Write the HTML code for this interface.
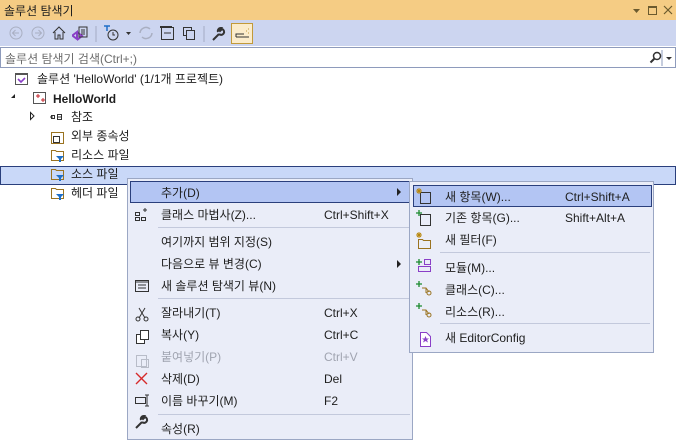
<!DOCTYPE html>
<html><head><meta charset="utf-8"><style>
*{margin:0;padding:0;box-sizing:border-box}
body{width:676px;height:446px;overflow:hidden;background:#fff;font-family:"Liberation Sans","Noto Sans CJK KR",sans-serif;font-size:12px;color:#1e1e1e;position:relative}
.abs{position:absolute}
.title{left:0;top:0;width:676px;height:20px;background:#f5cc84;}
.title span{position:absolute;left:4px;top:2px;font-size:12px}
.tb{left:0;top:20px;width:676px;height:26px;background:#ccd5f0}
.search{left:0;top:47px;width:676px;height:21px;border:1px solid #8e9bbc;background:#fff}
.search span{position:absolute;left:4px;top:2px;color:#6d6d6d}
.row{position:absolute;height:19px;line-height:19px;white-space:nowrap}
.menu{position:absolute;background:#eaedf8;border:1px solid #9ba7c4}
.mi{position:absolute;height:22px;line-height:22px;white-space:nowrap}
.sep{position:absolute;height:1px;background:#c3c9dc}
.hl{position:absolute;background:#b3c5f3;border:1px solid #2a3f7c}
</style></head><body>
<div class="abs title"><span>솔루션 탐색기</span>
<svg class="abs" style="left:630px;top:4px" width="44" height="12"><path d="M3 5h7l-3.5 4z" fill="#6b5a2e"/><rect x="18.5" y="2.5" width="8" height="8" fill="none" stroke="#6b5a2e"/><rect x="18" y="2" width="9" height="2" fill="#6b5a2e"/><path d="M34 2l8 8M42 2l-8 8" stroke="#6b5a2e" stroke-width="1.2"/></svg>
</div>
<div class="abs tb">
<svg width="260" height="26">
<circle cx="16" cy="13" r="6" fill="none" stroke="#a9afc2"/><path d="M19 13h-6m2.5-3l-3 3 3 3" stroke="#a9afc2" fill="none"/>
<circle cx="38" cy="13" r="6" fill="none" stroke="#a9afc2"/><path d="M35 13h6m-2.5-3l3 3-3 3" stroke="#a9afc2" fill="none"/>
<path d="M53 13l6-6 6 6M55 12v7h3v-4h2v4h3v-7" stroke="#333" fill="none"/>
<path d="M73 15l4-3v7l-4-3zM77 12l5 4-5 4" stroke="#8a3fc7" stroke-width="2" fill="none"/><rect x="79" y="7" width="8" height="10" fill="none" stroke="#333"/><path d="M81 10h4M81 12h4M81 14h4" stroke="#333"/>
<path d="M96 6v16" stroke="#a4acc4"/>
<path d="M104 6h6M107 6v5" stroke="#1e6fc7" stroke-width="1.5"/><circle cx="113" cy="15" r="5" fill="none" stroke="#333"/><path d="M113 12v3h2" stroke="#333" fill="none"/>
<path d="M126 12h5l-2.5 3z" fill="#333"/>
<path d="M140 13a6 6 0 0 1 10-4M152 13a6 6 0 0 1-10 4" stroke="#a9afc2" fill="none" stroke-width="1.5"/>
<rect x="161.5" y="7.5" width="12" height="12" fill="none" stroke="#333"/><path d="M164 13h7" stroke="#333"/><rect x="160" y="6" width="12" height="2" fill="#333"/>
<rect x="183.5" y="7.5" width="8" height="8" fill="none" stroke="#333"/><rect x="186.5" y="10.5" width="8" height="9" fill="#ccd5f0" stroke="#333"/>
<path d="M204 6v16" stroke="#a4acc4"/>
<path d="M213 20l6-6m0 0a3 3 0 1 0 3-5l-2 2-1-1 2-2a3 3 0 0 0-3 4" stroke="#333" stroke-width="2" fill="none"/>
<rect x="231.5" y="3.5" width="21" height="20" fill="#fbeccb" stroke="#c29a3a"/><path d="M236 17h13M236 17v-3h8" stroke="#333" fill="none"/><path d="M246 11h1M248 13h1M248 9h1" stroke="#c29a3a"/>
</svg></div>
<div class="abs search"><span>솔루션 탐색기 검색(Ctrl+;)</span>
<svg class="abs" style="left:646px;top:2px" width="28" height="16"><circle cx="10" cy="6" r="3.5" fill="none" stroke="#333" stroke-width="1.5"/><path d="M7.5 8.5l-4 4" stroke="#333" stroke-width="2"/><path d="M15 0v16" stroke="#8e9bbc"/><path d="M19 7h6l-3 3z" fill="#333"/></svg>
</div>
<!-- tree -->
<svg class="abs" style="left:0;top:70px" width="130" height="140">
<rect x="15.5" y="3.5" width="12" height="11" fill="#fff" stroke="#555"/><rect x="15" y="3" width="13" height="2" fill="#555"/><path d="M18 9l3 3 4-4" stroke="#8a3fc7" stroke-width="1.6" fill="none"/>
<path d="M11 28l4-4v4z" fill="#222"/>
<rect x="33.5" y="22.5" width="12" height="11" fill="#fff" stroke="#555"/><path d="M36 26h4M38 24v4M41 30h4M43 28v4" stroke="#c4262e"/>
<path d="M30.5 42.5l3.5 3.5-3.5 3.5z" fill="none" stroke="#222"/>
<path d="M50 47h3M58 47h3" stroke="#333"/><rect x="51.5" y="45.5" width="3" height="3" fill="none" stroke="#333"/><rect x="57.5" y="44.5" width="4" height="5" fill="none" stroke="#333"/>
<rect x="51.5" y="62.5" width="12" height="11" fill="#fff" stroke="#9a7320"/><rect x="53.5" y="66.5" width="6" height="6" fill="none" stroke="#333"/>
</svg>
<svg class="abs" style="left:50px;top:147px" width="16" height="60"><g id="f"><path d="M1.5 3.5h4l1 1h7v9h-12z" fill="none" stroke="#9a7320"/><path d="M6 9h8l-3 3v3h-2v-3z" fill="#1e6fc7"/></g><use href="#f" y="19"/><use href="#f" y="38"/></svg>
<div class="row" style="left:37px;top:70px">솔루션 'HelloWorld' (1/1개 프로젝트)</div>
<div class="row" style="left:53px;top:90px;font-weight:bold">HelloWorld</div>
<div class="row" style="left:71px;top:108px">참조</div>
<div class="row" style="left:71px;top:127px">외부 종속성</div>
<div class="row" style="left:71px;top:146px">리소스 파일</div>
<div class="abs" style="left:0;top:166px;width:676px;height:19px;background:#c9d8f8;border:1px solid #2a3f7c"></div>
<svg class="abs" style="left:50px;top:166px" width="16" height="19"><use href="#f"/></svg>
<div class="row" style="left:71px;top:165px">소스 파일</div>
<div class="row" style="left:71px;top:184px">헤더 파일</div>

<!-- context menu -->
<div class="menu" style="left:127px;top:178px;width:286px;height:262px">
<div class="hl" style="left:2px;top:2px;width:280px;height:22px"></div>
<svg class="abs" style="left:268px;top:9px" width="6" height="8"><path d="M1 0l4 4-4 4z" fill="#222"/></svg>
<svg class="abs" style="left:268px;top:81px" width="6" height="8"><path d="M1 0l4 4-4 4z" fill="#222"/></svg>
<div class="sep" style="left:30px;top:48px;width:252px"></div>
<div class="sep" style="left:30px;top:119px;width:252px"></div>
<div class="sep" style="left:30px;top:235px;width:252px"></div>
<div class="mi" style="left:33px;top:3px">추가(D)</div>
<div class="mi" style="left:33px;top:25px">클래스 마법사(Z)...</div><div class="mi" style="left:196px;top:25px">Ctrl+Shift+X</div>
<div class="mi" style="left:33px;top:52px">여기까지 범위 지정(S)</div>
<div class="mi" style="left:33px;top:74px">다음으로 뷰 변경(C)</div>
<div class="mi" style="left:33px;top:96px">새 솔루션 탐색기 뷰(N)</div>
<div class="mi" style="left:33px;top:123px">잘라내기(T)</div><div class="mi" style="left:196px;top:123px">Ctrl+X</div>
<div class="mi" style="left:33px;top:145px">복사(Y)</div><div class="mi" style="left:196px;top:145px">Ctrl+C</div>
<div class="mi" style="left:33px;top:167px;color:#a0a4b0">붙여넣기(P)</div><div class="mi" style="left:196px;top:167px;color:#a0a4b0">Ctrl+V</div>
<div class="mi" style="left:33px;top:189px">삭제(D)</div><div class="mi" style="left:196px;top:189px">Del</div>
<div class="mi" style="left:33px;top:211px">이름 바꾸기(M)</div><div class="mi" style="left:196px;top:211px">F2</div>
<div class="mi" style="left:33px;top:239px">속성(R)</div>
<svg class="abs" style="left:5px;top:25px" width="18" height="240">
<rect x="2.5" y="8.5" width="4" height="3" fill="none" stroke="#333"/><rect x="2.5" y="13.5" width="4" height="3" fill="none" stroke="#333"/><rect x="8.5" y="13.5" width="4" height="3" fill="none" stroke="#333"/><path d="M12 4v4M10 6h4" stroke="#333"/>
<rect x="2.5" y="76.5" width="13" height="11" fill="none" stroke="#333"/><path d="M2 78h14M5 81h8M5 84h8" stroke="#333"/>
<path d="M6 104l6 10M12 104l-6 10" stroke="#333"/><circle cx="5" cy="115" r="2" fill="none" stroke="#333"/><circle cx="13" cy="115" r="2" fill="none" stroke="#333"/>
<rect x="3.5" y="130.5" width="8" height="9" fill="#fff" stroke="#333"/><rect x="7.5" y="126.5" width="8" height="9" fill="#fff" stroke="#333"/>
<rect x="3.5" y="151.5" width="10" height="11" fill="none" stroke="#b8bcc8"/><rect x="8.5" y="155.5" width="7" height="8" fill="none" stroke="#b8bcc8"/>
<path d="M3 169l11 11M14 169l-11 11" stroke="#d62a2a" stroke-width="1.4"/>
<rect x="2.5" y="193.5" width="10" height="6" fill="none" stroke="#333"/><path d="M14 191v11M12 191h4M12 202h4" stroke="#333"/>
<path d="M3 224l6-6m0 0a3 3 0 1 0 3-5l-2 2-1-1 2-2a3 3 0 0 0-3 4" stroke="#333" stroke-width="2" fill="none"/>
</svg>
</div>

<!-- submenu -->
<div class="menu" style="left:409px;top:181px;width:245px;height:172px">
<div class="hl" style="left:3px;top:3px;width:239px;height:22px"></div>
<div class="sep" style="left:30px;top:70px;width:210px"></div>
<div class="sep" style="left:30px;top:141px;width:210px"></div>
<div class="mi" style="left:35px;top:4px">새 항목(W)...</div><div class="mi" style="left:155px;top:4px">Ctrl+Shift+A</div>
<div class="mi" style="left:35px;top:25px">기존 항목(G)...</div><div class="mi" style="left:155px;top:25px">Shift+Alt+A</div>
<div class="mi" style="left:35px;top:47px">새 필터(F)</div>
<div class="mi" style="left:35px;top:75px">모듈(M)...</div>
<div class="mi" style="left:35px;top:97px">클래스(C)...</div>
<div class="mi" style="left:35px;top:119px">리소스(R)...</div>
<div class="mi" style="left:35px;top:145px">새 EditorConfig</div>
<svg class="abs" style="left:6px;top:4px" width="18" height="166">
<rect x="4.5" y="6.5" width="10" height="11" fill="none" stroke="#333"/><path d="M3 2v6M0 5h6M1 3l4 4M5 3l-4 4" stroke="#b8860b"/>
<rect x="4.5" y="28.5" width="10" height="11" fill="none" stroke="#333"/><path d="M3 24v6M0 27h6" stroke="#1b8a2e" stroke-width="1.3"/>
<path d="M2.5 53.5h4l1 1h7v8h-12z" fill="none" stroke="#9a7320"/><path d="M3 46v6M0 49h6M1 47l4 4M5 47l-4 4" stroke="#b8860b"/>
<path d="M3 73v6M0 76h6" stroke="#1b8a2e" stroke-width="1.3"/><rect x="8.5" y="73.5" width="6" height="5" fill="none" stroke="#8a3fc7"/><rect x="2.5" y="80.5" width="12" height="5" fill="none" stroke="#8a3fc7"/>
<path d="M3 95v6M0 98h6" stroke="#1b8a2e" stroke-width="1.3"/><path d="M6 102h4l3 4M10 102v5" stroke="#9a7320" fill="none"/><circle cx="13" cy="107" r="2" fill="none" stroke="#9a7320"/>
<path d="M3 117v6M0 120h6" stroke="#1b8a2e" stroke-width="1.3"/><path d="M6 124h4l3 4M10 124v5" stroke="#9a7320" fill="none"/><circle cx="13" cy="129" r="2" fill="none" stroke="#9a7320"/>
<path d="M4.5 146.5h6l4 4v10h-10z" fill="#fff" stroke="#8a3fc7"/><path d="M9.5 150l1 2.5h2.5l-2 1.5 1 2.5-2.5-1.5-2.5 1.5 1-2.5-2-1.5h2.5z" fill="#8a3fc7"/>
</svg>
</div>
</body></html>
